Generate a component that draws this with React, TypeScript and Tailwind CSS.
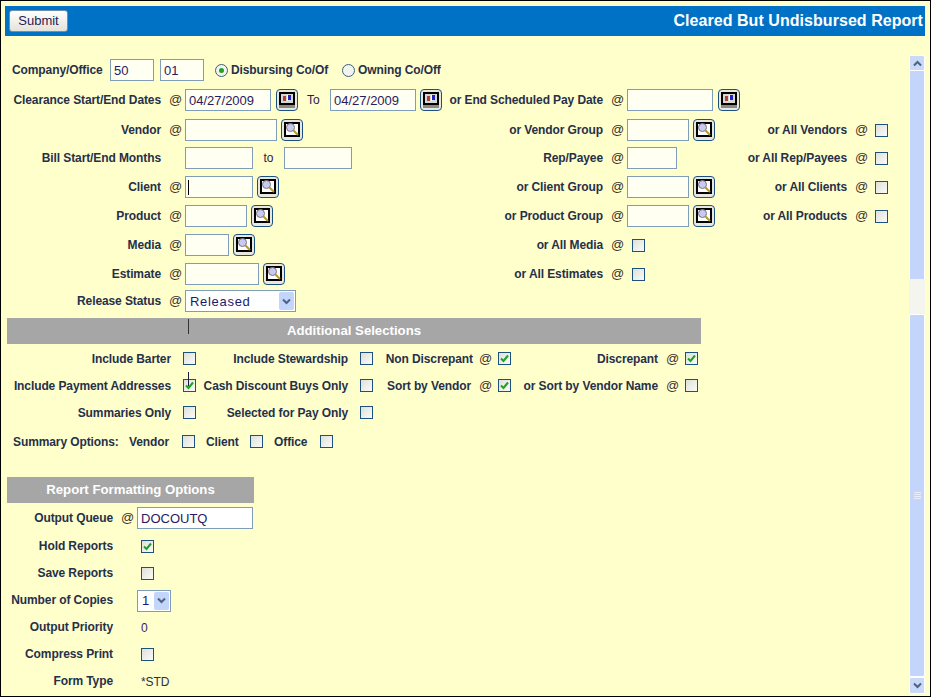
import React from "react";

const Label = ({ w, children, ml = "" }: { w: string; children: React.ReactNode; ml?: string }) => (
  <div className={`${w} ${ml} shrink-0 text-right whitespace-nowrap`}>{children}</div>
);

const At = ({ ml = "ml-[8px]" }: { ml?: string }) => (
  <div className={`${ml} w-[12px] shrink-0 text-center text-[13px] font-normal text-[#40302a]`}>@</div>
);

const Input = ({ w, value = "", caret = false, white = false }: { w: string; value?: string; caret?: boolean; white?: boolean }) => (
  <div
    className={`${w} relative h-[22px] shrink-0 border border-[#7f9db9] ${white ? "bg-white" : "bg-[#fffff2]"} pl-[3px] text-[13px] leading-[21px] font-normal tracking-normal text-[#2a1a60]`}
  >
    {value}
    {caret && <span className="absolute left-[2px] top-[3px] h-[15px] w-px bg-black" />}
  </div>
);

const IconBtn = ({ kind }: { kind: "search" | "cal" }) => (
  <div className="ml-[4px] flex h-[22px] w-[22px] shrink-0 items-center justify-center rounded-[4px] border border-[#1c5180] bg-[#e8e8e0]">
    <svg width="20" height="20" viewBox="0 0 20 20">
      {kind === "search" ? (
        <>
          <rect x="2" y="2" width="16" height="15" fill="#000" />
          <rect x="4" y="4" width="12" height="11" fill="#fff" />
          <circle cx="8.5" cy="7.5" r="4" fill="#c9c9f2" stroke="#777" strokeWidth="1" />
          <path d="M11.5 10.5 L16 15" stroke="#b59a2a" strokeWidth="2" />
        </>
      ) : (
        <>
          <rect x="2" y="2" width="16" height="13" fill="#000" />
          <rect x="4" y="4" width="12" height="9" fill="#d8d8d0" />
          <rect x="6" y="6" width="3" height="5" fill="#b04040" />
          <rect x="10" y="5" width="1" height="6" fill="#fff" />
          <rect x="11" y="5" width="3" height="5" fill="#2222cc" />
          <rect x="2" y="15" width="16" height="3" fill="#8a8a80" />
        </>
      )}
    </svg>
  </div>
);

const Check = ({ on = false, ml = "" }: { on?: boolean; ml?: string }) => (
  <div className={`${ml} flex h-[13px] w-[13px] shrink-0 items-center justify-center border border-[#1c5180] bg-gradient-to-br from-[#e0e0da] to-[#fafaf8]`}>
    {on && (
      <svg width="9" height="9" viewBox="0 0 9 9">
        <path d="M1 4.5 L3.5 7 L8 1.5" fill="none" stroke="#21a121" strokeWidth="2" />
      </svg>
    )}
  </div>
);

const Radio = ({ on = false }: { on?: boolean }) => (
  <div className="flex h-[13px] w-[13px] shrink-0 items-center justify-center rounded-full border border-[#3c5f80] bg-[#f4f4ee]">
    {on && <div className="h-[5px] w-[5px] rounded-full bg-[#21a121]" />}
  </div>
);

const Select = ({ w, value }: { w: string; value: string }) => (
  <div className={`${w} flex h-[22px] shrink-0 items-center justify-between border border-[#7f9db9] bg-white pl-[4px] pr-px text-[13px] font-normal tracking-[0.7px] text-[#1a1a6e]`}>
    <span className="pt-px">{value}</span>
    <span className="flex h-[18px] w-[15px] items-center justify-center rounded-[2px] bg-[#c3d5fb]">
      <svg width="9" height="7" viewBox="0 0 9 7">
        <path d="M1 1.5 L4.5 5 L8 1.5" fill="none" stroke="#4d6185" strokeWidth="2" />
      </svg>
    </span>
  </div>
);

const TopRow = ({ h, left, mid, midCtl, right }: { h: string; left: React.ReactNode; mid?: string; midCtl?: React.ReactNode; right?: string }) => (
  <div className={`${h} flex items-center`}>
    <div className="flex w-[433px] shrink-0 items-center">{left}</div>
    {mid && (
      <>
        <Label w="w-[163px]">{mid}</Label>
        <At />
        <div className="ml-[4px] flex w-[120px] shrink-0 items-center">{midCtl}</div>
      </>
    )}
    {right && (
      <>
        <Label w="w-[100px]">{right}</Label>
        <At />
        <Check ml="ml-[8px]" />
      </>
    )}
  </div>
);

const Main = ({ label, children, noAt = false }: { label: string; children: React.ReactNode; noAt?: boolean }) => (
  <>
    <Label w="w-[154px]">{label}</Label>
    {noAt ? <div className="ml-[8px] w-[12px]" /> : <At />}
    <div className="ml-[4px] flex items-center">{children}</div>
  </>
);

const AddRow = ({ h, children }: { h: string; children: React.ReactNode }) => <div className={`${h} flex items-center`}>{children}</div>;

const FmtRow = ({ label, children, at = false, h = "h-[27px]" }: { label: string; children: React.ReactNode; at?: boolean; h?: string }) => (
  <div className={`${h} flex items-center`}>
    <Label w="w-[106px]" ml={at ? "" : "pb-[2px]"}>{label}</Label>
    {at ? <At /> : <div className="ml-[8px] w-[12px]" />}
    <div className="ml-[4px] flex items-center">{children}</div>
  </div>
);

export default function App() {
  return (
    <div
      className="flex h-[697px] w-[931px] flex-col overflow-hidden border border-black bg-[#ffffcc] text-[12px] font-bold tracking-[-0.1px] text-[#26304a]"
      style={{ fontFamily: '"Liberation Sans", Arial, sans-serif' }}
    >
      <div className="mx-[4px] mt-[5px] flex h-[30px] w-[920px] shrink-0 items-center justify-between bg-[#0072c6] pl-[4px] pr-[2px]">
        <button className="h-[22px] w-[59px] rounded-[3px] border border-[#6f8fae] bg-gradient-to-b from-white to-[#e4e2d8] text-[13px] font-normal tracking-normal text-[#2a1a50]">
          Submit
        </button>
        <div className="text-[16px] font-bold tracking-[0.05px] text-white">Cleared But Undisbursed Report</div>
      </div>

      <div className="flex min-h-0 flex-1">
        <div className="w-[908px] shrink-0 pl-[6px]">
          <div className="h-[20px]" />
          <div className="flex h-[28px] items-center">
            <div className="w-[103px] shrink-0 pl-[5px] whitespace-nowrap">Company/Office</div>
            <Input w="w-[44px]" value="50" />
            <div className="ml-[6px]"><Input w="w-[44px]" value="01" /></div>
            <div className="ml-[11px]"><Radio on /></div>
            <div className="ml-[3px] w-[111px] whitespace-nowrap">Disbursing Co/Of</div>
            <Radio />
            <div className="ml-[3px] whitespace-nowrap">Owning Co/Off</div>
          </div>
          <div className="flex h-[32px] items-center">
            <Label w="w-[154px]">Clearance Start/End Dates</Label>
            <At />
            <div className="ml-[4px]"><Input w="w-[86px]" value="04/27/2009" /></div>
            <div className="ml-[1px]"><IconBtn kind="cal" /></div>
            <div className="ml-[9px] w-[23px] font-normal text-[#2a1a50]">To</div>
            <Input w="w-[86px]" value="04/27/2009" />
            <IconBtn kind="cal" />
            <Label w="w-[161px]">or End Scheduled Pay Date</Label>
            <At />
            <div className="ml-[4px]"><Input w="w-[86px]" /></div>
            <div className="ml-px"><IconBtn kind="cal" /></div>
          </div>
          <TopRow
            h="h-[28px]"
            left={<Main label="Vendor"><Input w="w-[92px]" /><IconBtn kind="search" /></Main>}
            mid="or Vendor Group"
            midCtl={<><Input w="w-[62px]" /><IconBtn kind="search" /></>}
            right="or All Vendors"
          />
          <TopRow
            h="h-[28px]"
            left={
              <Main label="Bill Start/End Months" noAt>
                <Input w="w-[68px]" />
                <div className="w-[31px] text-center font-normal text-[#2a1a50]">to</div>
                <Input w="w-[68px]" />
              </Main>
            }
            mid="Rep/Payee"
            midCtl={<Input w="w-[50px]" />}
            right="or All Rep/Payees"
          />
          <TopRow
            h="h-[30px]"
            left={<Main label="Client"><Input w="w-[68px]" caret /><IconBtn kind="search" /></Main>}
            mid="or Client Group"
            midCtl={<><Input w="w-[62px]" /><IconBtn kind="search" /></>}
            right="or All Clients"
          />
          <TopRow
            h="h-[28px]"
            left={<Main label="Product"><Input w="w-[62px]" /><IconBtn kind="search" /></Main>}
            mid="or Product Group"
            midCtl={<><Input w="w-[62px]" /><IconBtn kind="search" /></>}
            right="or All Products"
          />
          <TopRow
            h="h-[30px]"
            left={<Main label="Media"><Input w="w-[44px]" /><IconBtn kind="search" /></Main>}
            mid="or All Media"
            midCtl={<Check ml="ml-[5px]" />}
          />
          <TopRow
            h="h-[28px]"
            left={<Main label="Estimate"><Input w="w-[74px]" /><IconBtn kind="search" /></Main>}
            mid="or All Estimates"
            midCtl={<Check ml="ml-[5px]" />}
          />
          <TopRow h="h-[26px]" left={<Main label="Release Status"><Select w="w-[111px]" value="Released" /></Main>} />
          <div className="h-[4px]" />

          <div className="relative flex h-[26px] w-[694px] items-center justify-center bg-[#a6a6a6] text-[13.2px] font-bold tracking-normal text-white">
            Additional Selections
            <span className="absolute left-[181px] top-[1px] h-[15px] w-px bg-[#333]" />
          </div>

          <div className="relative">
            <span className="absolute left-[181px] top-[28px] z-10 h-[14px] w-px bg-[#14203c]" />
            <AddRow h="h-[29px]">
              <Label w="w-[164px]">Include Barter</Label>
              <Check ml="ml-[12px]" />
              <Label w="w-[152px]">Include Stewardship</Label>
              <Check ml="ml-[12px]" />
              <Label w="w-[100px]">Non Discrepant</Label>
              <At ml="ml-[6px]" />
              <Check on ml="ml-[7px]" />
              <Label w="w-[147px]">Discrepant</Label>
              <At />
              <Check on ml="ml-[7px]" />
            </AddRow>
            <AddRow h="h-[25px]">
              <Label w="w-[164px]">Include Payment Addresses</Label>
              <Check on ml="ml-[12px]" />
              <Label w="w-[152px]">Cash Discount Buys Only</Label>
              <Check ml="ml-[12px]" />
              <Label w="w-[98px]">Sort by Vendor</Label>
              <At />
              <Check on ml="ml-[7px]" />
              <Label w="w-[147px]">or Sort by Vendor Name</Label>
              <At />
              <Check ml="ml-[7px]" />
            </AddRow>
            <AddRow h="h-[29px]">
              <Label w="w-[164px]">Summaries Only</Label>
              <Check ml="ml-[12px]" />
              <Label w="w-[152px]">Selected for Pay Only</Label>
              <Check ml="ml-[12px]" />
            </AddRow>
            <AddRow h="h-[29px]">
              <div className="w-[122px] shrink-0 pl-[6px] whitespace-nowrap">Summary Options:</div>
              <div className="w-[53px] shrink-0 whitespace-nowrap">Vendor</div>
              <Check />
              <div className="ml-[11px] w-[44px]">Client</div>
              <Check />
              <div className="ml-[11px] w-[46px]">Office</div>
              <Check />
            </AddRow>
          </div>

          <div className="h-[21px]" />
          <div className="flex h-[26px] w-[247px] items-center justify-center bg-[#a6a6a6] text-[13.2px] font-bold tracking-normal text-white">Report Formatting Options</div>
          <div>
            <FmtRow label="Output Queue" at h="h-[30px]"><Input w="w-[116px]" value="DOCOUTQ" white /></FmtRow>
            <FmtRow label="Hold Reports"><Check on ml="ml-[4px]" /></FmtRow>
            <FmtRow label="Save Reports"><Check ml="ml-[4px]" /></FmtRow>
            <FmtRow label="Number of Copies"><Select w="w-[34px]" value="1" /></FmtRow>
            <FmtRow label="Output Priority"><span className="ml-[4px] font-normal text-[#3a1a70]">0</span></FmtRow>
            <FmtRow label="Compress Print"><Check ml="ml-[4px]" /></FmtRow>
            <FmtRow label="Form Type"><span className="ml-[4px] font-normal">*STD</span></FmtRow>
          </div>
        </div>

        <div className="mt-[19px] mb-[2px] flex w-[16px] shrink-0 flex-col">
          <div className="flex h-[16px] shrink-0 items-center justify-center rounded-[2px] border border-white bg-[#c9daf8]">
            <svg width="9" height="7" viewBox="0 0 9 7"><path d="M1 5.5 L4.5 2 L8 5.5" fill="none" stroke="#4d6185" strokeWidth="2" /></svg>
          </div>
          <div className="h-[208px] shrink-0 border-x border-white bg-[#c3d5fb]" />
          <div className="h-[35px] shrink-0 bg-[#f5f5f0]" />
          <div className="flex flex-1 items-center justify-center rounded-[2px] border border-white bg-[#c3d5fb]">
            <div className="flex flex-col gap-px">
              <span className="h-px w-[7px] bg-[#e8f0ff]" />
              <span className="h-px w-[7px] bg-[#e8f0ff]" />
              <span className="h-px w-[7px] bg-[#e8f0ff]" />
              <span className="h-px w-[7px] bg-[#e8f0ff]" />
            </div>
          </div>
          <div className="flex h-[17px] shrink-0 items-center justify-center rounded-[2px] border border-white bg-[#c9daf8]">
            <svg width="9" height="7" viewBox="0 0 9 7"><path d="M1 1.5 L4.5 5 L8 1.5" fill="none" stroke="#4d6185" strokeWidth="2" /></svg>
          </div>
        </div>
      </div>
    </div>
  );
}
